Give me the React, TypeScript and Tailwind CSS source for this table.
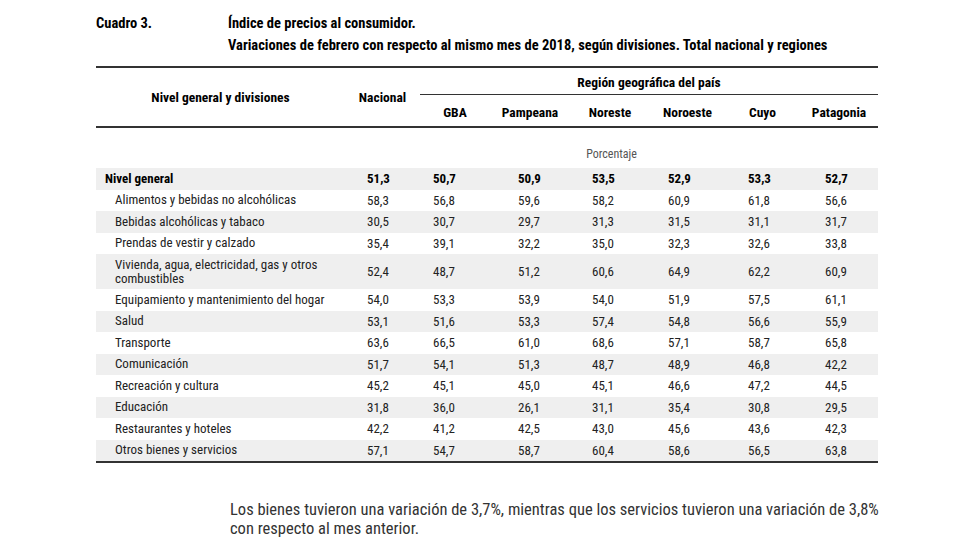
const rows: { label: string; values: string[]; bold?: boolean; tall?: boolean }[] = [
  { label: "Nivel general", values: ["51,3", "50,7", "50,9", "53,5", "52,9", "53,3", "52,7"], bold: true },
  { label: "Alimentos y bebidas no alcohólicas", values: ["58,3", "56,8", "59,6", "58,2", "60,9", "61,8", "56,6"] },
  { label: "Bebidas alcohólicas y tabaco", values: ["30,5", "30,7", "29,7", "31,3", "31,5", "31,1", "31,7"] },
  { label: "Prendas de vestir y calzado", values: ["35,4", "39,1", "32,2", "35,0", "32,3", "32,6", "33,8"] },
  { label: "Vivienda, agua, electricidad, gas y otros combustibles", values: ["52,4", "48,7", "51,2", "60,6", "64,9", "62,2", "60,9"], tall: true },
  { label: "Equipamiento y mantenimiento del hogar", values: ["54,0", "53,3", "53,9", "54,0", "51,9", "57,5", "61,1"] },
  { label: "Salud", values: ["53,1", "51,6", "53,3", "57,4", "54,8", "56,6", "55,9"] },
  { label: "Transporte", values: ["63,6", "66,5", "61,0", "68,6", "57,1", "58,7", "65,8"] },
  { label: "Comunicación", values: ["51,7", "54,1", "51,3", "48,7", "48,9", "46,8", "42,2"] },
  { label: "Recreación y cultura", values: ["45,2", "45,1", "45,0", "45,1", "46,6", "47,2", "44,5"] },
  { label: "Educación", values: ["31,8", "36,0", "26,1", "31,1", "35,4", "30,8", "29,5"] },
  { label: "Restaurantes y hoteles", values: ["42,2", "41,2", "42,5", "43,0", "45,6", "43,6", "42,3"] },
  { label: "Otros bienes y servicios", values: ["57,1", "54,7", "58,7", "60,4", "58,6", "56,5", "63,8"] },
];

const regions = ["GBA", "Pampeana", "Noreste", "Noroeste", "Cuyo", "Patagonia"];
const regionWidths = ["w-[70px]", "w-[80px]", "w-[80px]", "w-[75px]", "w-[75px]", "w-[78px]"];
// left offsets of the numbers inside each column, as in the print
const valuePad = ["pl-[22px]", "pl-[13px]", "pl-[28px]", "pl-[22px]", "pl-[18px]", "pl-[23px]", "pl-[25px]"];

const grid = "grid grid-cols-[249px_75px_70px_80px_80px_75px_75px_78px]";

export default function App() {
  return (
    <div className="w-[955px] h-[548px] bg-white text-[#222] font-['Roboto_Condensed','Liberation_Sans',sans-serif] overflow-hidden">
      <div className="flex pl-[96px] pt-[13px] text-[14.5px] font-bold text-black leading-[22px]">
        <div className="w-[132px]">Cuadro 3.</div>
        <div>
          <div>Índice de precios al consumidor.</div>
          <div>Variaciones de febrero con respecto al mismo mes de 2018, según divisiones. Total nacional y regiones</div>
        </div>
      </div>

      <div className="ml-[96px] w-[782px] mt-[9px]">
        <div className="border-t-2 border-[#333] flex text-[13.5px] font-bold text-black border-b-2">
          <div className="w-[249px] flex items-center justify-center">Nivel general y divisiones</div>
          <div className="w-[75px] flex items-center justify-center">Nacional</div>
          <div className="flex-1 flex flex-col">
            <div className="h-[27px] flex items-center justify-center pt-[3px] border-b-[1.5px] border-[#333]">
              Región geográfica del país
            </div>
            <div className="flex h-[31px] pt-[3px]">
              {regions.map((r, i) => (
                <div key={r} className={`${regionWidths[i]} flex items-center justify-center`}>
                  {r}
                </div>
              ))}
            </div>
          </div>
        </div>

        <div className="h-[40px] flex items-end pb-[5px]">
          <div className="ml-[249px] w-[533px] text-center text-[12px] text-[#555]">Porcentaje</div>
        </div>

        <div className="border-b-2 border-[#333]">
          {rows.map((row, i) => (
            <div
              key={row.label}
              className={`${grid} ${row.tall ? "h-[35px]" : "h-[21.5px]"} ${i % 2 === 0 ? "bg-[#efefef]" : "bg-white"} ${row.bold ? "font-bold text-black" : ""} text-[13px]`}
            >
              <div className={`flex items-center leading-[14px] ${row.bold ? "pl-[9px]" : "pl-[19px]"}`}>
                {row.tall ? (
                  <span>
                    Vivienda, agua, electricidad, gas y otros
                    <br />
                    combustibles
                  </span>
                ) : (
                  row.label
                )}
              </div>
              {row.values.map((v, j) => (
                <div key={j} className={`flex items-center ${valuePad[j]}`}>
                  {v}
                </div>
              ))}
            </div>
          ))}
        </div>
      </div>

      <div className="pl-[230px] pt-[37px] text-[16.5px] leading-[19px] text-[#333]">
        Los bienes tuvieron una variación de 3,7%, mientras que los servicios tuvieron una variación de 3,8%
        <br />
        con respecto al mes anterior.
      </div>
    </div>
  );
}
